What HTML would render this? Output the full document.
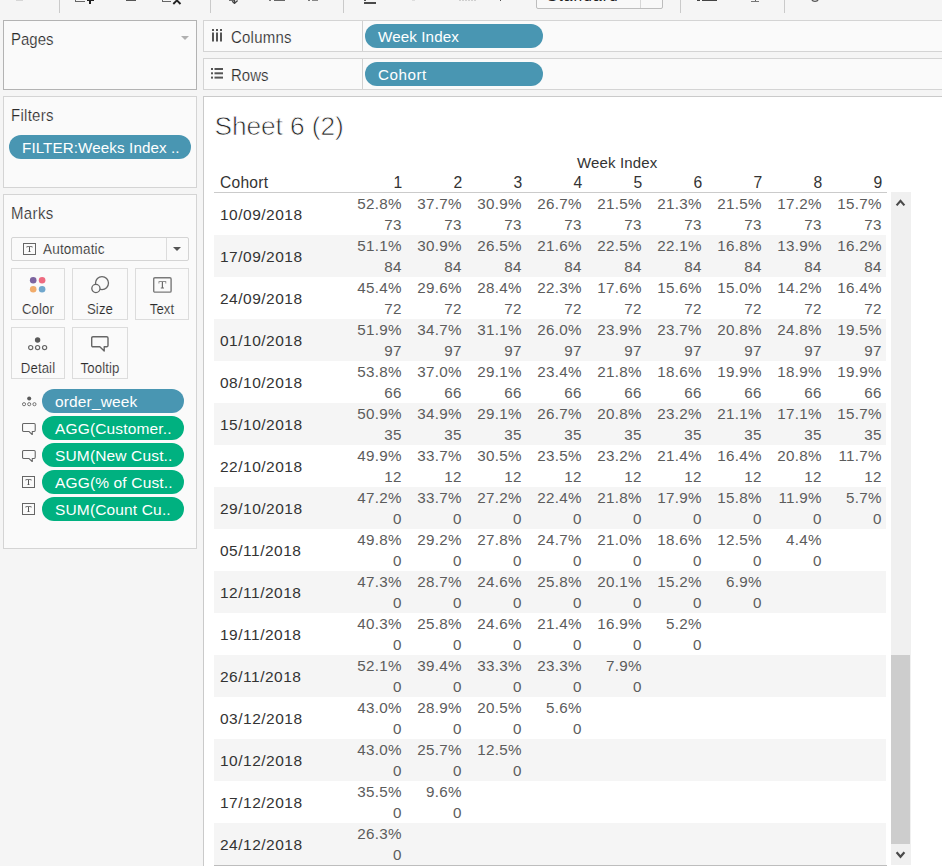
<!DOCTYPE html>
<html>
<head>
<meta charset="utf-8">
<title>Sheet 6 (2)</title>
<style>
*{box-sizing:border-box;margin:0;padding:0}
html,body{width:942px;height:866px;overflow:hidden;background:#f5f5f5}
body{position:relative;font-family:"Liberation Sans",sans-serif;font-size:15px;color:#333}
.abs{position:absolute}
.card{position:absolute;background:#fafafa;border:1px solid #d4d4d4}
.card .ttl{position:absolute;left:7px;font-size:16.2px;color:#2b2b2b;line-height:18px;-webkit-text-stroke:.2px #fafafa;transform:scaleX(.925);transform-origin:0 0;white-space:nowrap}
.pill{position:absolute;height:24px;border-radius:12px;color:#fff;font-size:15.2px;line-height:26px;white-space:nowrap;overflow:hidden;letter-spacing:.1px}
.blue{background:#4996b2}
.green{background:#00b180}
.vsep{position:absolute;width:1px;background:#d0d0d0}
/* marks buttons */
.mbtn{position:absolute;background:#fafafa;border:1px solid #dcdcdc;height:52px}
.mbtn span{position:absolute;left:0;right:0;bottom:2px;text-align:center;font-size:14.7px;line-height:16px;color:#2b2b2b;letter-spacing:.1px;-webkit-text-stroke:.18px #fafafa;transform:scaleX(.9)}
/* table */
.row{position:absolute;left:214px;width:672px;height:42px}
.row.sh{background:#f5f5f5}
.row .lab{position:absolute;left:6px;top:13px;line-height:18px;font-size:15.5px;color:#333;letter-spacing:.5px}
.c{position:absolute;top:0;width:60px;text-align:right;font-size:15.2px;line-height:21px;color:#5c5c5c;letter-spacing:.3px;padding-top:0;padding-right:4.2px}
.hd{position:absolute;font-size:15.6px;line-height:18px;color:#333}
</style>
</head>
<body>

<!-- toolbar remnants -->
<div id="tb">
<div class="abs" style="left:16px;top:0;width:7px;height:1px;background:#d6d6d6"></div>
<div class="vsep" style="left:59px;top:0;height:13px;background:#cacaca"></div>
<div class="abs" style="left:75px;top:0;width:10px;height:2px;border:1px solid #666;border-top:0;border-right:0"></div>
<div class="abs" style="left:87px;top:0;width:7px;height:1px;background:#222"></div>
<div class="abs" style="left:89px;top:0;width:2px;height:4px;background:#222"></div>
<div class="abs" style="left:126px;top:0;width:10px;height:1px;background:#555"></div>
<div class="abs" style="left:162px;top:0;width:9px;height:2px;border:1px solid #666;border-top:0;border-right:0"></div>
<svg class="abs" style="left:172px;top:0" width="10" height="5" viewBox="0 0 10 5"><path d="M1.3 4L4.9 .4L8.5 4" fill="none" stroke="#222" stroke-width="1.9"/></svg>
<div class="vsep" style="left:210px;top:0;height:13px;background:#cacaca"></div>
<svg class="abs" style="left:228px;top:0" width="13" height="4" viewBox="0 0 13 4"><path d="M1 0H6M6.5 0V3.2M4.2 1.2L6.5 3.4L9.6 .6" fill="none" stroke="#444" stroke-width="1.3"/></svg>
<div class="abs" style="left:269px;top:0;width:2px;height:1px;background:#777"></div>
<div class="abs" style="left:274px;top:0;width:11px;height:1px;background:#666"></div>
<div class="abs" style="left:308px;top:0;width:2px;height:1px;background:#777"></div>
<div class="abs" style="left:312px;top:0;width:6px;height:1px;background:#888"></div>
<div class="vsep" style="left:343px;top:0;height:13px;background:#cacaca"></div>
<div class="abs" style="left:364px;top:0;width:2px;height:1px;background:#555"></div>
<div class="abs" style="left:364px;top:2px;width:12px;height:2px;background:#4a4a4a"></div>
<div class="abs" style="left:412px;top:0;width:3px;height:1px;background:#ddd"></div>
<div class="abs" style="left:459px;top:0;width:17px;height:1px;background:repeating-linear-gradient(90deg,#d0d0d0 0 2px,#f5f5f5 2px 3px)"></div>
<div class="abs" style="left:500px;top:0;width:1px;height:1px;background:#555"></div>
<div class="abs" style="left:536px;top:-10px;width:127px;height:19px;border:1px solid #bdbdbd;border-radius:2px;background:#f8f8f8;overflow:hidden"></div>
<div class="vsep" style="left:640px;top:0;height:8px;background:#d6d6d6"></div>
<div class="abs" style="left:547px;top:-12.3px;font-size:15.5px;line-height:16px;letter-spacing:1.1px;color:#222">Standard</div>
<div class="vsep" style="left:680px;top:0;height:13px;background:#cacaca"></div>
<div class="abs" style="left:697px;top:0;width:3px;height:1px;background:#444"></div>
<div class="abs" style="left:702px;top:0;width:15px;height:1px;background:#444"></div>
<div class="abs" style="left:755px;top:0;width:1px;height:2px;background:#666"></div>
<div class="abs" style="left:751px;top:1px;width:8px;height:1px;background:#777"></div>
<div class="vsep" style="left:784px;top:0;height:13px;background:#cacaca"></div>
<svg class="abs" style="left:810px;top:0" width="10" height="3" viewBox="0 0 10 3"><path d="M1.6 -2A3.4 3.4 0 0 0 8.4 -2" fill="none" stroke="#555" stroke-width="1.3"/></svg>
</div>

<!-- Pages card -->
<div class="card" style="left:3px;top:20px;width:194px;height:70px;border-color:#b3b3b3">
  <div class="ttl" style="top:9px">Pages</div>
  <svg class="abs" style="left:177px;top:15px" width="8" height="4" viewBox="0 0 8 4"><path d="M0 0H8L4 4Z" fill="#b0b0b0"/></svg>
</div>

<!-- Filters card -->
<div class="card" style="left:3px;top:96px;width:194px;height:92px">
  <div class="ttl" style="top:9px;letter-spacing:.3px">Filters</div>
  <div class="pill blue" style="left:5px;top:38px;width:182px;padding-left:13px">FILTER:Weeks Index ..</div>
</div>

<!-- Marks card -->
<div class="card" id="marks" style="left:3px;top:194px;width:194px;height:355px">
<div class="ttl" style="top:9px;letter-spacing:.4px">Marks</div>
<div class="abs" style="left:7px;top:42px;width:178px;height:24px;border:1px solid #d4d4d4;background:#fafafa;border-radius:2px"></div>
<div class="vsep" style="left:162px;top:43px;height:22px;background:#dcdcdc"></div>
<svg class="abs" style="left:19px;top:48px" width="14" height="13" viewBox="0 0 14 13"><rect x=".5" y=".5" width="12" height="11" fill="none" stroke="#666"/><path d="M3.6 3.2H9.4V4.8H8.8V4H7V8.4H7.8V9H5.2V8.4H6V4H4.2V4.8H3.6Z" fill="#555"/></svg>
<div class="abs" style="left:39px;top:45px;font-size:14.7px;line-height:18px;letter-spacing:.2px;color:#2b2b2b;-webkit-text-stroke:.18px #fafafa;transform:scaleX(.92);transform-origin:0 0">Automatic</div>
<svg class="abs" style="left:169px;top:52px" width="8" height="4" viewBox="0 0 8 4"><path d="M0 0H8L4 4Z" fill="#555"/></svg>
<div class="mbtn" style="left:7px;top:73px;width:54px"><span>Color</span></div>
<div class="mbtn" style="left:68px;top:73px;width:56px"><span>Size</span></div>
<div class="mbtn" style="left:131px;top:73px;width:54px"><span>Text</span></div>
<div class="mbtn" style="left:7px;top:132px;width:54px"><span>Detail</span></div>
<div class="mbtn" style="left:68px;top:132px;width:56px"><span>Tooltip</span></div>
<svg class="abs" style="left:25px;top:81px" width="18" height="18" viewBox="0 0 18 18"><circle cx="4.2" cy="4.3" r="3.3" fill="#7c649f"/><circle cx="13.1" cy="4.3" r="3.3" fill="#ee6b80"/><circle cx="4.2" cy="13.2" r="3.3" fill="#f1ac6b"/><circle cx="13.1" cy="13.2" r="3.3" fill="#70a7cd"/></svg>
<svg class="abs" style="left:86px;top:80px" width="20" height="20" viewBox="0 0 20 20"><circle cx="12" cy="8.1" r="6.5" fill="none" stroke="#666" stroke-width="1.3"/><circle cx="5.9" cy="13.5" r="4.1" fill="#fafafa" stroke="#666" stroke-width="1.3"/></svg>
<svg class="abs" style="left:149px;top:82px" width="19" height="16" viewBox="0 0 19 16"><rect x=".7" y=".7" width="17.4" height="14.4" rx="1.2" fill="none" stroke="#7a7a7a" stroke-width="1.4"/><path d="M5.6 4.2H13.2V6.4H12.5V5.1H10V10.6H11V11.4H7.8V10.6H8.8V5.1H6.3V6.4H5.6Z" fill="#6a6a6a"/></svg>
<svg class="abs" style="left:24px;top:142px" width="20" height="14" viewBox="0 0 20 14"><circle cx="9.6" cy="3" r="2.7" fill="#5a5a5a"/><circle cx="2.7" cy="10.6" r="2.1" fill="none" stroke="#666" stroke-width="1.2"/><circle cx="9.6" cy="10.6" r="2.1" fill="none" stroke="#666" stroke-width="1.2"/><circle cx="16.6" cy="10.6" r="2.1" fill="none" stroke="#666" stroke-width="1.2"/></svg>
<svg class="abs" style="left:87px;top:141px" width="18" height="16" viewBox="0 0 18 16"><path d="M2 .7H15.6Q17 .7 17 2.1V9.4Q17 10.8 15.6 10.8H13.2V15L8.8 10.8H2Q.7 10.8 .7 9.4V2.1Q.7 .7 2 .7Z" fill="none" stroke="#666" stroke-width="1.4" stroke-linejoin="round"/></svg>
<div class="pill blue" style="left:38px;top:194px;width:142px;padding-left:13px;font-size:15.5px;letter-spacing:.15px">order_week</div>
<svg class="abs" style="left:18px;top:201px" width="15" height="11" viewBox="0 0 20 14"><circle cx="9.6" cy="3" r="2.7" fill="#5a5a5a"/><circle cx="2.7" cy="10.6" r="2.1" fill="none" stroke="#666" stroke-width="1.2"/><circle cx="9.6" cy="10.6" r="2.1" fill="none" stroke="#666" stroke-width="1.2"/><circle cx="16.6" cy="10.6" r="2.1" fill="none" stroke="#666" stroke-width="1.2"/></svg>
<div class="pill green" style="left:38px;top:221px;width:142px;padding-left:13px;font-size:15.5px;letter-spacing:.15px">AGG(Customer..</div>
<svg class="abs" style="left:18px;top:227.5px" width="14" height="12.5" viewBox="0 0 18 16"><path d="M2 .7H15.6Q17 .7 17 2.1V9.4Q17 10.8 15.6 10.8H13.2V15L8.8 10.8H2Q.7 10.8 .7 9.4V2.1Q.7 .7 2 .7Z" fill="none" stroke="#666" stroke-width="1.4" stroke-linejoin="round"/></svg>
<div class="pill green" style="left:38px;top:248px;width:142px;padding-left:13px;font-size:15.5px;letter-spacing:.15px">SUM(New Cust..</div>
<svg class="abs" style="left:18px;top:254.5px" width="14" height="12.5" viewBox="0 0 18 16"><path d="M2 .7H15.6Q17 .7 17 2.1V9.4Q17 10.8 15.6 10.8H13.2V15L8.8 10.8H2Q.7 10.8 .7 9.4V2.1Q.7 .7 2 .7Z" fill="none" stroke="#666" stroke-width="1.4" stroke-linejoin="round"/></svg>
<div class="pill green" style="left:38px;top:275px;width:142px;padding-left:13px;font-size:15.5px;letter-spacing:.15px">AGG(% of Cust..</div>
<svg class="abs" style="left:18px;top:281px" width="14" height="13" viewBox="0 0 14 13"><rect x=".5" y=".5" width="12" height="11" fill="none" stroke="#666"/><path d="M3.6 3.2H9.4V4.8H8.8V4H7V8.4H7.8V9H5.2V8.4H6V4H4.2V4.8H3.6Z" fill="#555"/></svg>
<div class="pill green" style="left:38px;top:302px;width:142px;padding-left:13px;font-size:15.5px;letter-spacing:.15px">SUM(Count Cu..</div>
<svg class="abs" style="left:18px;top:308px" width="14" height="13" viewBox="0 0 14 13"><rect x=".5" y=".5" width="12" height="11" fill="none" stroke="#666"/><path d="M3.6 3.2H9.4V4.8H8.8V4H7V8.4H7.8V9H5.2V8.4H6V4H4.2V4.8H3.6Z" fill="#555"/></svg>
</div>

<!-- Shelves -->
<div class="card" style="left:203px;top:20px;width:745px;height:32px">
  <div class="vsep" style="left:158px;top:0;height:30px"></div>
  <svg class="abs" style="left:8px;top:8px" width="11" height="13" viewBox="0 0 11 13"><g fill="#555"><rect x="0" y="0" width="2" height="2"/><rect x="0" y="3.5" width="2" height="9"/><rect x="4" y="0" width="2" height="2"/><rect x="4" y="3.5" width="2" height="9"/><rect x="8" y="0" width="2" height="2"/><rect x="8" y="3.5" width="2" height="9"/></g></svg>
  <div class="abs" style="left:27px;top:7px;line-height:18px;font-size:16.2px;color:#2b2b2b;-webkit-text-stroke:.2px #fafafa;transform:scaleX(.925);transform-origin:0 0;letter-spacing:.25px">Columns</div>
  <div class="pill blue" style="left:161px;top:3px;width:178px;padding-left:13px">Week Index</div>
</div>
<div class="card" style="left:203px;top:58px;width:745px;height:32px">
  <div class="vsep" style="left:158px;top:0;height:30px"></div>
  <svg class="abs" style="left:7px;top:9px" width="12" height="11" viewBox="0 0 12 11"><g fill="#555"><rect x="0" y="0" width="2" height="2"/><rect x="3.5" y="0" width="8.5" height="2"/><rect x="0" y="4.3" width="2" height="2"/><rect x="3.5" y="4.3" width="8.5" height="2"/><rect x="0" y="8.6" width="2" height="2"/><rect x="3.5" y="8.6" width="8.5" height="2"/></g></svg>
  <div class="abs" style="left:27px;top:7px;line-height:18px;font-size:16.2px;color:#2b2b2b;-webkit-text-stroke:.2px #fafafa;transform:scaleX(.925);transform-origin:0 0">Rows</div>
  <div class="pill blue" style="left:161px;top:3px;width:178px;padding-left:13px;letter-spacing:.55px">Cohort</div>
</div>

<!-- Canvas -->
<div class="abs" id="canvas" style="left:203px;top:96px;width:745px;height:780px;background:#fff;border:1px solid #cacaca"></div>
<div class="abs" style="left:214.6px;top:110.6px;font-size:26.3px;line-height:31px;color:#262626;letter-spacing:-.1px;-webkit-text-stroke:.75px #fff">Sheet 6 (2)</div>

<div id="tbl">
<div class="hd" style="left:577px;top:154px;font-size:15px;letter-spacing:.15px">Week Index</div>
<div class="hd" style="left:220px;top:174px;letter-spacing:.25px">Cohort</div>
<div class="hd" style="left:346px;top:174px;width:60px;text-align:right;padding-right:3.8px;font-size:15.7px">1</div>
<div class="hd" style="left:406px;top:174px;width:60px;text-align:right;padding-right:3.8px;font-size:15.7px">2</div>
<div class="hd" style="left:466px;top:174px;width:60px;text-align:right;padding-right:3.8px;font-size:15.7px">3</div>
<div class="hd" style="left:526px;top:174px;width:60px;text-align:right;padding-right:3.8px;font-size:15.7px">4</div>
<div class="hd" style="left:586px;top:174px;width:60px;text-align:right;padding-right:3.8px;font-size:15.7px">5</div>
<div class="hd" style="left:646px;top:174px;width:60px;text-align:right;padding-right:3.8px;font-size:15.7px">6</div>
<div class="hd" style="left:706px;top:174px;width:60px;text-align:right;padding-right:3.8px;font-size:15.7px">7</div>
<div class="hd" style="left:766px;top:174px;width:60px;text-align:right;padding-right:3.8px;font-size:15.7px">8</div>
<div class="hd" style="left:826px;top:174px;width:60px;text-align:right;padding-right:3.8px;font-size:15.7px">9</div>
<div class="abs" style="left:214px;top:192px;width:673px;height:1px;background:#cbcbcb"></div>
<div class="row" style="top:193px"><div class="lab">10/09/2018</div><div class="c" style="left:132px">52.8%<br>73</div><div class="c" style="left:192px">37.7%<br>73</div><div class="c" style="left:252px">30.9%<br>73</div><div class="c" style="left:312px">26.7%<br>73</div><div class="c" style="left:372px">21.5%<br>73</div><div class="c" style="left:432px">21.3%<br>73</div><div class="c" style="left:492px">21.5%<br>73</div><div class="c" style="left:552px">17.2%<br>73</div><div class="c" style="left:612px">15.7%<br>73</div></div>
<div class="row sh" style="top:235px"><div class="lab">17/09/2018</div><div class="c" style="left:132px">51.1%<br>84</div><div class="c" style="left:192px">30.9%<br>84</div><div class="c" style="left:252px">26.5%<br>84</div><div class="c" style="left:312px">21.6%<br>84</div><div class="c" style="left:372px">22.5%<br>84</div><div class="c" style="left:432px">22.1%<br>84</div><div class="c" style="left:492px">16.8%<br>84</div><div class="c" style="left:552px">13.9%<br>84</div><div class="c" style="left:612px">16.2%<br>84</div></div>
<div class="row" style="top:277px"><div class="lab">24/09/2018</div><div class="c" style="left:132px">45.4%<br>72</div><div class="c" style="left:192px">29.6%<br>72</div><div class="c" style="left:252px">28.4%<br>72</div><div class="c" style="left:312px">22.3%<br>72</div><div class="c" style="left:372px">17.6%<br>72</div><div class="c" style="left:432px">15.6%<br>72</div><div class="c" style="left:492px">15.0%<br>72</div><div class="c" style="left:552px">14.2%<br>72</div><div class="c" style="left:612px">16.4%<br>72</div></div>
<div class="row sh" style="top:319px"><div class="lab">01/10/2018</div><div class="c" style="left:132px">51.9%<br>97</div><div class="c" style="left:192px">34.7%<br>97</div><div class="c" style="left:252px">31.1%<br>97</div><div class="c" style="left:312px">26.0%<br>97</div><div class="c" style="left:372px">23.9%<br>97</div><div class="c" style="left:432px">23.7%<br>97</div><div class="c" style="left:492px">20.8%<br>97</div><div class="c" style="left:552px">24.8%<br>97</div><div class="c" style="left:612px">19.5%<br>97</div></div>
<div class="row" style="top:361px"><div class="lab">08/10/2018</div><div class="c" style="left:132px">53.8%<br>66</div><div class="c" style="left:192px">37.0%<br>66</div><div class="c" style="left:252px">29.1%<br>66</div><div class="c" style="left:312px">23.4%<br>66</div><div class="c" style="left:372px">21.8%<br>66</div><div class="c" style="left:432px">18.6%<br>66</div><div class="c" style="left:492px">19.9%<br>66</div><div class="c" style="left:552px">18.9%<br>66</div><div class="c" style="left:612px">19.9%<br>66</div></div>
<div class="row sh" style="top:403px"><div class="lab">15/10/2018</div><div class="c" style="left:132px">50.9%<br>35</div><div class="c" style="left:192px">34.9%<br>35</div><div class="c" style="left:252px">29.1%<br>35</div><div class="c" style="left:312px">26.7%<br>35</div><div class="c" style="left:372px">20.8%<br>35</div><div class="c" style="left:432px">23.2%<br>35</div><div class="c" style="left:492px">21.1%<br>35</div><div class="c" style="left:552px">17.1%<br>35</div><div class="c" style="left:612px">15.7%<br>35</div></div>
<div class="row" style="top:445px"><div class="lab">22/10/2018</div><div class="c" style="left:132px">49.9%<br>12</div><div class="c" style="left:192px">33.7%<br>12</div><div class="c" style="left:252px">30.5%<br>12</div><div class="c" style="left:312px">23.5%<br>12</div><div class="c" style="left:372px">23.2%<br>12</div><div class="c" style="left:432px">21.4%<br>12</div><div class="c" style="left:492px">16.4%<br>12</div><div class="c" style="left:552px">20.8%<br>12</div><div class="c" style="left:612px">11.7%<br>12</div></div>
<div class="row sh" style="top:487px"><div class="lab">29/10/2018</div><div class="c" style="left:132px">47.2%<br>0</div><div class="c" style="left:192px">33.7%<br>0</div><div class="c" style="left:252px">27.2%<br>0</div><div class="c" style="left:312px">22.4%<br>0</div><div class="c" style="left:372px">21.8%<br>0</div><div class="c" style="left:432px">17.9%<br>0</div><div class="c" style="left:492px">15.8%<br>0</div><div class="c" style="left:552px">11.9%<br>0</div><div class="c" style="left:612px">5.7%<br>0</div></div>
<div class="row" style="top:529px"><div class="lab">05/11/2018</div><div class="c" style="left:132px">49.8%<br>0</div><div class="c" style="left:192px">29.2%<br>0</div><div class="c" style="left:252px">27.8%<br>0</div><div class="c" style="left:312px">24.7%<br>0</div><div class="c" style="left:372px">21.0%<br>0</div><div class="c" style="left:432px">18.6%<br>0</div><div class="c" style="left:492px">12.5%<br>0</div><div class="c" style="left:552px">4.4%<br>0</div></div>
<div class="row sh" style="top:571px"><div class="lab">12/11/2018</div><div class="c" style="left:132px">47.3%<br>0</div><div class="c" style="left:192px">28.7%<br>0</div><div class="c" style="left:252px">24.6%<br>0</div><div class="c" style="left:312px">25.8%<br>0</div><div class="c" style="left:372px">20.1%<br>0</div><div class="c" style="left:432px">15.2%<br>0</div><div class="c" style="left:492px">6.9%<br>0</div></div>
<div class="row" style="top:613px"><div class="lab">19/11/2018</div><div class="c" style="left:132px">40.3%<br>0</div><div class="c" style="left:192px">25.8%<br>0</div><div class="c" style="left:252px">24.6%<br>0</div><div class="c" style="left:312px">21.4%<br>0</div><div class="c" style="left:372px">16.9%<br>0</div><div class="c" style="left:432px">5.2%<br>0</div></div>
<div class="row sh" style="top:655px"><div class="lab">26/11/2018</div><div class="c" style="left:132px">52.1%<br>0</div><div class="c" style="left:192px">39.4%<br>0</div><div class="c" style="left:252px">33.3%<br>0</div><div class="c" style="left:312px">23.3%<br>0</div><div class="c" style="left:372px">7.9%<br>0</div></div>
<div class="row" style="top:697px"><div class="lab">03/12/2018</div><div class="c" style="left:132px">43.0%<br>0</div><div class="c" style="left:192px">28.9%<br>0</div><div class="c" style="left:252px">20.5%<br>0</div><div class="c" style="left:312px">5.6%<br>0</div></div>
<div class="row sh" style="top:739px"><div class="lab">10/12/2018</div><div class="c" style="left:132px">43.0%<br>0</div><div class="c" style="left:192px">25.7%<br>0</div><div class="c" style="left:252px">12.5%<br>0</div></div>
<div class="row" style="top:781px"><div class="lab">17/12/2018</div><div class="c" style="left:132px">35.5%<br>0</div><div class="c" style="left:192px">9.6%<br>0</div></div>
<div class="row sh" style="top:823px"><div class="lab">24/12/2018</div><div class="c" style="left:132px">26.3%<br>0</div></div>
<div class="abs" style="left:214px;top:865px;width:673px;height:1px;background:#bdbdbd"></div>
<div class="abs" style="left:891px;top:192px;width:20px;height:673px;background:#f0f0f0"></div>
<div class="abs" style="left:891px;top:655px;width:19px;height:189px;background:#cdcdcd"></div>
<svg class="abs" style="left:893px;top:196px" width="16" height="12" viewBox="0 0 16 12"><path d="M3.6 9.4L7.5 4.9L11.4 9.4" fill="none" stroke="#4a4a4a" stroke-width="2.2"/></svg>
<svg class="abs" style="left:893px;top:848px" width="16" height="12" viewBox="0 0 16 12"><path d="M3.6 4.2L7.5 8.7L11.4 4.2" fill="none" stroke="#4a4a4a" stroke-width="2.2"/></svg>
</div>

</body>
</html>
